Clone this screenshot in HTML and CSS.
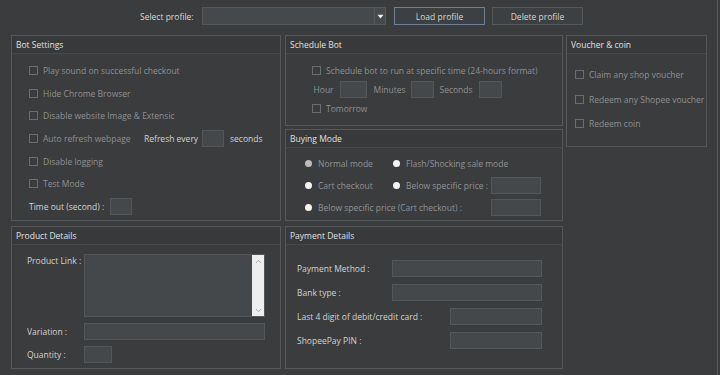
FILE: index.html
```html
<!DOCTYPE html>
<html>
<head>
<meta charset="utf-8">
<link rel="stylesheet" href="styles.css">
</head>
<body>
<div class="window">
  <div class="topbar">
    <span class="tb-label">Select profile:</span>
    <div class="combo">
      <div class="combo-arrow">
        <svg width="7" height="5" viewBox="0 0 7 5"><path d="M0.5 0.8 L6.5 0.8 L3.5 4.4 Z" fill="#f0f0f0"/></svg>
      </div>
    </div>
    <div class="btn btn-focus">Load profile</div>
    <div class="btn btn-delete">Delete profile</div>
  </div>

  <div class="main">
    <div class="col col1">
      <div class="group g-bot">
        <div class="g-title">Bot Settings</div>
        <div class="g-body bot-body">
          <div class="row"><span class="check"><span class="box"></span>Play sound on successful checkout</span></div>
          <div class="row"><span class="check"><span class="box"></span>Hide Chrome Browser</span></div>
          <div class="row"><span class="check"><span class="box"></span>Disable website Image &amp; Extensic</span></div>
          <div class="row">
            <span class="check auto-check"><span class="box"></span>Auto refresh webpage</span>
            <span class="lbl refresh-lbl">Refresh every</span>
            <span class="input in-small"></span>
            <span class="lbl seconds-lbl">seconds</span>
          </div>
          <div class="row"><span class="check"><span class="box"></span>Disable logging</span></div>
          <div class="row"><span class="check"><span class="box"></span>Test Mode</span></div>
          <div class="row">
            <span class="lbl timeout-lbl">Time out (second) :</span>
            <span class="input in-small"></span>
          </div>
        </div>
      </div>

      <div class="group g-product">
        <div class="g-title">Product Details</div>
        <div class="g-body product-body">
          <div class="p-row">
            <span class="lbl p-lbl p-lbl-top">Product Link :</span>
            <div class="textarea">
              <div class="scrollbar">
                <svg width="7" height="5" viewBox="0 0 7 5"><path d="M1 4 L3.5 1.2 L6 4" fill="none" stroke="#a8a8a8" stroke-width="0.9"/></svg>
                <svg width="7" height="5" viewBox="0 0 7 5"><path d="M1 1 L3.5 3.8 L6 1" fill="none" stroke="#a8a8a8" stroke-width="0.9"/></svg>
              </div>
            </div>
          </div>
          <div class="p-row p-row-mid">
            <span class="lbl p-lbl">Variation :</span>
            <span class="input in-variation"></span>
          </div>
          <div class="p-row p-row-mid">
            <span class="lbl p-lbl">Quantity :</span>
            <span class="input in-qty"></span>
          </div>
        </div>
      </div>
    </div>

    <div class="col col2">
      <div class="group g-schedule">
        <div class="g-title">Schedule Bot</div>
        <div class="g-body sched-body">
          <div class="srow"><span class="check"><span class="box"></span>Schedule bot to run at specific time (24-hours format)</span></div>
          <div class="srow time-row">
            <span class="dis w-hour">Hour</span>
            <span class="input in-hour"></span>
            <span class="dis w-min">Minutes</span>
            <span class="input in-time"></span>
            <span class="dis w-sec">Seconds</span>
            <span class="input in-time"></span>
          </div>
          <div class="srow"><span class="check"><span class="box"></span>Tomorrow</span></div>
        </div>
      </div>

      <div class="group g-buying">
        <div class="g-title">Buying Mode</div>
        <div class="g-body buy-body">
          <div class="brow">
            <span class="radio-item r-col1"><span class="radio radio-checked"></span>Normal mode</span>
            <span class="radio-item"><span class="radio"></span>Flash/Shocking sale mode</span>
          </div>
          <div class="brow">
            <span class="radio-item r-col1"><span class="radio"></span>Cart checkout</span>
            <span class="radio-item r-col2"><span class="radio"></span>Below specific price :</span>
            <span class="input in-price"></span>
          </div>
          <div class="brow">
            <span class="radio-item r-wide"><span class="radio"></span>Below specific price (Cart checkout) :</span>
            <span class="input in-price"></span>
          </div>
        </div>
      </div>

      <div class="group g-payment">
        <div class="g-title">Payment Details</div>
        <div class="g-body pay-body">
          <div class="pay-row">
            <span class="lbl pay-lbl">Payment Method :</span>
            <span class="input in-pay"></span>
          </div>
          <div class="pay-row">
            <span class="lbl pay-lbl">Bank type :</span>
            <span class="input in-pay"></span>
          </div>
          <div class="pay-row">
            <span class="lbl pay-lbl-wide">Last 4 digit of debit/credit card :</span>
            <span class="input in-pay-short"></span>
          </div>
          <div class="pay-row">
            <span class="lbl pay-lbl-wide">ShopeePay PIN :</span>
            <span class="input in-pay-short"></span>
          </div>
        </div>
      </div>
    </div>

    <div class="col col3">
      <div class="group g-voucher">
        <div class="g-title">Voucher &amp; coin</div>
        <div class="g-body voucher-body">
          <div class="vrow"><span class="check"><span class="box"></span>Claim any shop voucher</span></div>
          <div class="vrow"><span class="check"><span class="box"></span>Redeem any Shopee voucher</span></div>
          <div class="vrow"><span class="check"><span class="box"></span>Redeem coin</span></div>
        </div>
      </div>
    </div>
  </div>
</div>
</body>
</html>
```

FILE: styles.css
```css
* { box-sizing: border-box; }

html, body {
  margin: 0;
  padding: 0;
  background: #3a3c3e;
}

body {
  font-family: "Open Sans", "Noto Sans", sans-serif;
  font-size: 8.5px;
  color: #d4d4d4;
  white-space: nowrap;
}

.window {
  width: 718px;
  height: 375px;
  border-right: 1px solid #575a5c;
  overflow: hidden;
}

/* top bar */
.topbar {
  display: flex;
  align-items: center;
  height: 18px;
  margin-top: 7px;
  margin-bottom: 10px;
  padding-left: 140px;
}

.tb-label {
  width: 62px;
  color: #d8d8d8;
}

.combo {
  width: 184px;
  height: 18px;
  background: #46494b;
  border: 1px solid #55585a;
  display: flex;
  justify-content: flex-end;
}

.combo-arrow {
  width: 11px;
  border-left: 1px solid #55585a;
  display: flex;
  align-items: center;
  justify-content: center;
}

.btn {
  width: 91px;
  height: 18px;
  display: flex;
  align-items: center;
  justify-content: center;
  background: #3d4042;
  border: 1px solid #55585a;
  color: #d4d4d4;
}

.btn-focus {
  margin-left: 8px;
  border-color: #6d8196;
}

.btn-delete {
  margin-left: 7px;
}

/* main layout */
.main {
  display: flex;
  align-items: flex-start;
  padding-left: 11px;
}

.col {
  display: flex;
  flex-direction: column;
}

.col1 { width: 270px; gap: 5px; }
.col2 { width: 278px; margin-left: 4px; }
.col3 { width: 141px; margin-left: 3px; }

.group {
  border: 1px solid #55585a;
  background: #3a3c3e;
}

.g-title {
  height: 18px;
  line-height: 17px;
  padding-left: 4px;
  background: #37393b;
  border-bottom: 1px solid #46484a;
  color: #e0e0e0;
}

.g-bot { height: 186px; }
.g-product { height: 143px; }
.g-schedule { height: 91px; }
.g-buying { height: 92px; margin-top: 3px; }
.g-payment { height: 143px; margin-top: 5px; }
.g-voucher { height: 112px; }

/* common controls */
.check {
  display: flex;
  align-items: center;
  color: #8e9092;
}

.box {
  width: 9px;
  height: 9px;
  border: 1px solid #6a6c6e;
  margin-right: 5px;
  flex: none;
}

.lbl { color: #d2d2d2; }
.dis { color: #8e9092; }

.input {
  display: block;
  height: 17px;
  background: #45484a;
  border: 1px solid #54575a;
  flex: none;
}

/* bot settings */
.bot-body {
  padding-top: 5px;
  padding-left: 17px;
}

.row {
  display: flex;
  align-items: center;
  height: 22.7px;
}

.auto-check { width: 115px; }
.refresh-lbl { width: 58px; }
.in-small { width: 22px; }
.seconds-lbl { margin-left: 6px; }
.timeout-lbl { width: 81px; }

/* product details */
.product-body {
  padding-top: 9px;
  padding-left: 15px;
}

.p-row {
  display: flex;
  align-items: center;
}

.p-row-mid { margin-top: 6px; }

.p-lbl { width: 57px; }

.p-row:first-child { align-items: flex-start; }

.p-lbl-top {
  line-height: 14px;
}

.textarea {
  width: 181px;
  height: 63px;
  background: #45484a;
  border: 1px solid #54575a;
  display: flex;
  justify-content: flex-end;
}

.scrollbar {
  width: 12px;
  height: 100%;
  background: #eeeeee;
  display: flex;
  flex-direction: column;
  align-items: center;
  justify-content: space-between;
  padding: 4px 0 3px;
}

.in-variation { width: 181px; }
.in-qty { width: 28px; }

/* schedule */
.sched-body {
  padding-top: 7px;
  padding-left: 26px;
}

.srow {
  display: flex;
  align-items: center;
  height: 19px;
}

.time-row { padding-left: 1.5px; }
.w-hour { width: 26px; }
.in-hour { width: 27px; }
.w-min { width: 37px; margin-left: 7px; }
.in-time { width: 23px; }
.w-sec { width: 39px; margin-left: 6px; }

/* buying */
.buy-body {
  padding-top: 4px;
  padding-left: 19px;
}

.brow {
  display: flex;
  align-items: center;
  height: 22px;
}

.radio-item {
  display: flex;
  align-items: center;
  color: #909294;
}

.radio {
  width: 7px;
  height: 7px;
  border-radius: 50%;
  background: #f4f4f4;
  margin-right: 6px;
  flex: none;
}

.radio-checked { background: #bdbdbd; }

.r-col1 { width: 88px; }
.r-col2 { width: 98px; }
.r-wide { width: 186px; }
.in-price { width: 50px; }

/* payment */
.pay-body {
  padding-top: 15px;
  padding-left: 11px;
  display: flex;
  flex-direction: column;
  gap: 7px;
}

.pay-row {
  display: flex;
  align-items: center;
}

.pay-lbl { width: 95px; }
.pay-lbl-wide { width: 153px; }
.in-pay { width: 150px; }
.in-pay-short { width: 92px; }

/* voucher */
.voucher-body {
  padding-top: 8.5px;
  padding-left: 8px;
}

.vrow {
  display: flex;
  align-items: center;
  height: 24.6px;
}
```
